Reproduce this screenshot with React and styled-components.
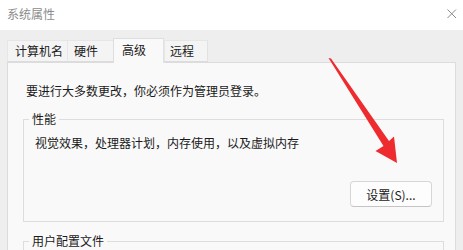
import React from "react";
import styled, { createGlobalStyle } from "styled-components";

const Global = createGlobalStyle`
  html, body { margin: 0; padding: 0; background: #eeeeee; }
  body { font-family: "Noto Sans CJK SC", "Noto Sans", sans-serif; font-size: 12px; color: #1a1a1a; }
`;

const Window = styled.div`
  position: relative;
  width: 463px;
  height: 250px;
  overflow: hidden;
  background: #eeeeee;
  display: flex;
  flex-direction: column;
`;

const TitleBar = styled.div`
  height: 30px;
  flex: none;
  background: #ffffff;
  display: flex;
  align-items: center;
  justify-content: space-between;
  padding: 0 5px 2px 7px;
  box-sizing: border-box;
`;

const Title = styled.span`
  font-size: 12px;
  line-height: 14px;
  color: #8c8c8c;
`;

const Body = styled.div`
  flex: 1;
  display: flex;
  flex-direction: column;
  padding: 8px 7px 0 7px;
  min-height: 0;
`;

const TabList = styled.div`
  display: flex;
  align-items: flex-end;
  height: 24px;
  flex: none;
  position: relative;
  z-index: 1;
`;

const Tab = styled.div`
  box-sizing: border-box;
  width: ${(p) => p.$w}px;
  padding-left: ${(p) => p.$pl}px;
  height: ${(p) => (p.$active ? 25 : 22)}px;
  margin-bottom: ${(p) => (p.$active ? -1 : 0)}px;
  padding-bottom: ${(p) => (p.$active ? 3 : 0)}px;
  display: flex;
  align-items: center;
  font-size: 12px;
  line-height: 14px;
  color: #1a1a1a;
  background: ${(p) => (p.$active ? "#f9f9f9" : "#f4f4f4")};
  border: 1px solid ${(p) => (p.$active ? "#dedede" : "#e6e6e6")};
  border-bottom: ${(p) => (p.$active ? "none" : "1px solid #dcdcdc")};
  border-right: ${(p) => (p.$last || p.$active ? "1px solid #e2e2e2" : "none")};
`;

const Panel = styled.div`
  flex: 1;
  background: #f9f9f9;
  border: 1px solid #dcdcdc;
  border-bottom: none;
  padding: 19px 11px 0 15px;
`;

const Intro = styled.div`
  margin-left: 3px;
  line-height: 17px;
  font-size: 12px;
`;

const Group = styled.fieldset`
  margin: ${(p) => p.$mt}px 0 0 0;
  padding: 0;
  border: 1px solid #dddddd;
  min-width: 0;
`;

const Legend = styled.legend`
  margin-left: 5px;
  padding: 0 3px;
  font-size: 12px;
  line-height: 14px;
  color: #1a1a1a;
`;

const GroupBody = styled.div`
  padding: 8px 11px 14px 11px;
  display: flex;
  flex-direction: column;
`;

const GroupText = styled.div`
  line-height: 17px;
`;

const ButtonRow = styled.div`
  margin-top: 30px;
  display: flex;
  justify-content: flex-end;
`;

const Button = styled.button`
  width: 82px;
  height: 26px;
  box-sizing: border-box;
  background: #fdfdfd;
  border: 1px solid #d6d6d6;
  border-bottom-color: #c4c4c4;
  border-radius: 4px;
  font-family: inherit;
  font-size: 12px;
  color: #1a1a1a;
  padding: 0;
`;

const Overlay = styled.svg`
  position: absolute;
  left: 0;
  top: 0;
  pointer-events: none;
  z-index: 5;
`;

export default function App() {
  return (
    <>
      <Global />
      <Window>
        <TitleBar>
          <Title>系统属性</Title>
          <svg width="12" height="12" viewBox="0 0 12 12">
            <path d="M1.5 1.5 L10 10 M10 1.5 L1.5 10" stroke="#8a8a8a" strokeWidth="1" fill="none" />
          </svg>
        </TitleBar>
        <Body>
          <TabList>
            <Tab $w={60} $pl={7}>计算机名</Tab>
            <Tab $w={46} $pl={6}>硬件</Tab>
            <Tab $w={51} $pl={8} $active>高级</Tab>
            <Tab $w={44} $pl={5} $last>远程</Tab>
          </TabList>
          <Panel>
            <Intro>要进行大多数更改，你必须作为管理员登录。</Intro>
            <Group $mt={13}>
              <Legend>性能</Legend>
              <GroupBody>
                <GroupText>视觉效果，处理器计划，内存使用，以及虚拟内存</GroupText>
                <ButtonRow>
                  <Button>设置(S)...</Button>
                </ButtonRow>
              </GroupBody>
            </Group>
            <Group $mt={12}>
              <Legend>用户配置文件</Legend>
              <GroupBody />
            </Group>
          </Panel>
        </Body>
        <Overlay width="463" height="250" viewBox="0 0 463 250">
          <polygon
            points="328.5,58 331,58.5 389,141 394,136.5 397,163 375.5,151 383.5,146"
            fill="#ee2b2e"
          />
        </Overlay>
      </Window>
    </>
  );
}
